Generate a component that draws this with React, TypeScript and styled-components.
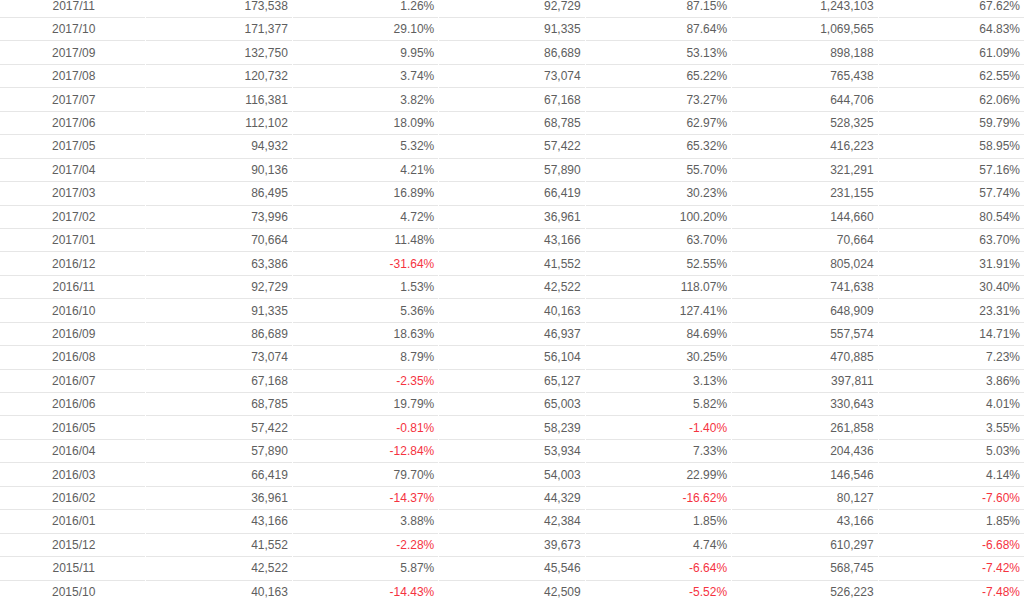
import React from "react";
import styled, { createGlobalStyle } from "styled-components";

const Global = createGlobalStyle`
  html, body { margin: 0; padding: 0; background: #fff; overflow: hidden; }
  body { font-family: "Liberation Sans", Arial, sans-serif; }
`;

const Viewport = styled.div`
  width: 1024px;
  height: 602px;
  overflow: hidden;
`;

const Table = styled.div`
  display: grid;
  grid-template-columns: repeat(7, 1fr);
  grid-auto-rows: 23.44px;
  column-gap: 1px;
  margin-top: -5.4px;
`;

const Cell = styled.div<{ $align: "center" | "right"; $neg?: boolean }>`
  display: flex;
  align-items: center;
  justify-content: ${(p) => (p.$align === "center" ? "center" : "flex-end")};
  padding: ${(p) => (p.$align === "center" ? "0 0 0 2px" : "0 4px 0 0")};
  border-bottom: 1px solid #e6e6e6;
  font-size: 12px;
  color: ${(p) => (p.$neg ? "#f5333f" : "#5e5e5e")};
  box-sizing: border-box;
  white-space: nowrap;
`;

const rows: string[][] = [
  ["2017/11", "173,538", "1.26%", "92,729", "87.15%", "1,243,103", "67.62%"],
  ["2017/10", "171,377", "29.10%", "91,335", "87.64%", "1,069,565", "64.83%"],
  ["2017/09", "132,750", "9.95%", "86,689", "53.13%", "898,188", "61.09%"],
  ["2017/08", "120,732", "3.74%", "73,074", "65.22%", "765,438", "62.55%"],
  ["2017/07", "116,381", "3.82%", "67,168", "73.27%", "644,706", "62.06%"],
  ["2017/06", "112,102", "18.09%", "68,785", "62.97%", "528,325", "59.79%"],
  ["2017/05", "94,932", "5.32%", "57,422", "65.32%", "416,223", "58.95%"],
  ["2017/04", "90,136", "4.21%", "57,890", "55.70%", "321,291", "57.16%"],
  ["2017/03", "86,495", "16.89%", "66,419", "30.23%", "231,155", "57.74%"],
  ["2017/02", "73,996", "4.72%", "36,961", "100.20%", "144,660", "80.54%"],
  ["2017/01", "70,664", "11.48%", "43,166", "63.70%", "70,664", "63.70%"],
  ["2016/12", "63,386", "-31.64%", "41,552", "52.55%", "805,024", "31.91%"],
  ["2016/11", "92,729", "1.53%", "42,522", "118.07%", "741,638", "30.40%"],
  ["2016/10", "91,335", "5.36%", "40,163", "127.41%", "648,909", "23.31%"],
  ["2016/09", "86,689", "18.63%", "46,937", "84.69%", "557,574", "14.71%"],
  ["2016/08", "73,074", "8.79%", "56,104", "30.25%", "470,885", "7.23%"],
  ["2016/07", "67,168", "-2.35%", "65,127", "3.13%", "397,811", "3.86%"],
  ["2016/06", "68,785", "19.79%", "65,003", "5.82%", "330,643", "4.01%"],
  ["2016/05", "57,422", "-0.81%", "58,239", "-1.40%", "261,858", "3.55%"],
  ["2016/04", "57,890", "-12.84%", "53,934", "7.33%", "204,436", "5.03%"],
  ["2016/03", "66,419", "79.70%", "54,003", "22.99%", "146,546", "4.14%"],
  ["2016/02", "36,961", "-14.37%", "44,329", "-16.62%", "80,127", "-7.60%"],
  ["2016/01", "43,166", "3.88%", "42,384", "1.85%", "43,166", "1.85%"],
  ["2015/12", "41,552", "-2.28%", "39,673", "4.74%", "610,297", "-6.68%"],
  ["2015/11", "42,522", "5.87%", "45,546", "-6.64%", "568,745", "-7.42%"],
  ["2015/10", "40,163", "-14.43%", "42,509", "-5.52%", "526,223", "-7.48%"],
];

export default function App() {
  return (
    <>
      <Global />
      <Viewport>
        <Table>
          {rows.map((r) =>
            r.map((v, i) => (
              <Cell
                key={r[0] + i}
                $align={i === 0 ? "center" : "right"}
                $neg={v.startsWith("-")}
              >
                {v}
              </Cell>
            ))
          )}
        </Table>
      </Viewport>
    </>
  );
}
